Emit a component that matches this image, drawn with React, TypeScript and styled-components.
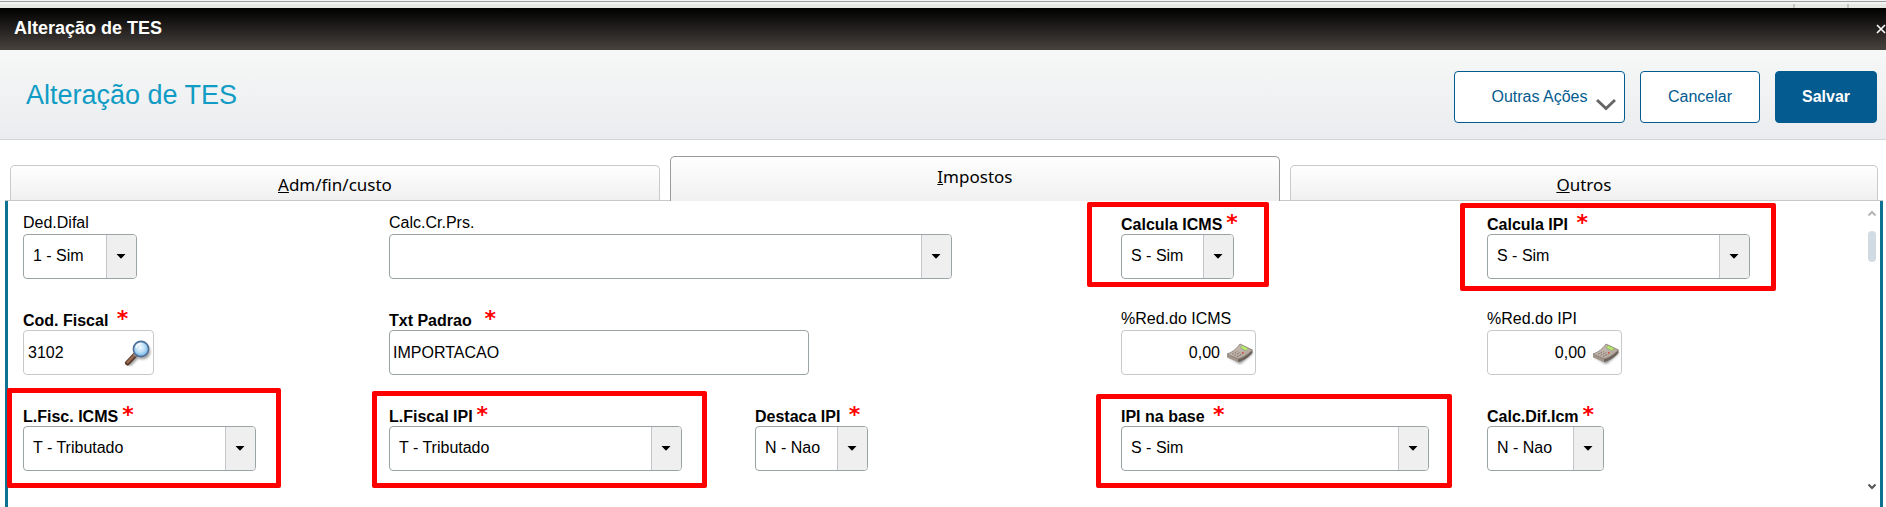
import React, { useId } from "react";
import styled, { createGlobalStyle, css } from "styled-components";

const GlobalStyle = createGlobalStyle`
  * { box-sizing: border-box; }
  html, body { margin: 0; padding: 0; background: #fff; }
  body, button, input, select {
    font-family: "Liberation Sans", Arial, sans-serif;
    font-size: 16px;
    color: #000;
  }
`;

const Window = styled.main`
  display: flex;
  flex-direction: column;
  min-height: 100vh;
`;

const WindowEdge = styled.div`
  height: 8px;
  display: flex;
  justify-content: flex-end;
  align-items: flex-end;
  gap: 52px;
  padding-right: 37px;
  border-top: 1px solid #f2f3f3;
  background: linear-gradient(#999c9c 0 1px, #f2f3f1 1px 3px, #e6e8e4 3px);
`;

const EdgeTick = styled.span`
  width: 2px;
  height: 4px;
  background: #c4c6c6;
`;

const TitleBar = styled.div`
  display: flex;
  align-items: center;
  justify-content: space-between;
  height: 42px;
  padding: 0 0 0 14px;
  background: linear-gradient(#000, #47423e);
  color: #fff;
`;

const WindowTitle = styled.span`
  font-size: 18px;
  line-height: 20px;
  font-weight: 700;
  padding-bottom: 2px;
`;

const CloseButton = styled.button`
  display: flex;
  padding: 0;
  border: 0;
  background: none;
`;

const Header = styled.header`
  display: flex;
  align-items: center;
  justify-content: space-between;
  height: 90px;
  padding: 0 9px 0 26px;
  border-bottom: 1px solid #d2d4d6;
  background: linear-gradient(#f6f8f7, #ebecef);
`;

const Heading = styled.h1`
  margin: 0;
  font-size: 27px;
  line-height: 32px;
  font-weight: 400;
  color: #109cc4;
`;

const Actions = styled.div`
  display: flex;
  gap: 15px;
  padding-top: 4px;
`;

const ActionButton = styled.button<{ $width: number; $primary?: boolean }>`
  position: relative;
  width: ${(p) => p.$width}px;
  height: 52px;
  padding: 0;
  border: 1px solid #045b8f;
  border-radius: 4px;
  background: #fff;
  color: #045b8f;
  ${(p) =>
    p.$primary &&
    css`
      background: #045b8f;
      color: #fff;
      font-weight: 700;
    `}
`;

const ButtonChevron = styled.svg`
  position: absolute;
  right: 8px;
  bottom: 10px;
`;

const TabList = styled.div`
  display: flex;
  align-items: flex-end;
  gap: 10px;
  margin: 16px 3px 0 5px;
  padding: 0 5px;
  border-bottom: 1px solid #c8c8c8;
`;

const Tab = styled.button<{ $grow: number; $active?: boolean }>`
  flex: ${(p) => p.$grow} 1 0;
  height: 35px;
  padding: 4px 0 0;
  border: 1px solid #c8cacb;
  border-bottom: 0;
  border-radius: 5px 5px 0 0;
  background: linear-gradient(#fff, #f0f0f0);
  font-family: "Noto Sans", Tahoma, sans-serif;
  font-size: 17px;
  line-height: 24px;
  ${(p) =>
    p.$active &&
    css`
      height: 45px;
      margin-bottom: -1px;
      padding: 0 0 4px;
      border-color: #999c9e;
    `}
`;

const Panel = styled.section`
  flex: 1;
  display: flex;
  margin: 0 3px 0 5px;
  border: solid #0b7391;
  border-width: 0 3px;
`;

const FieldGrid = styled.form`
  flex: 1;
  display: grid;
  grid-template-columns: repeat(5, minmax(0, 1fr));
  grid-auto-rows: 96px;
  padding: 9px 13px 0 15px;
`;

const Scrollbar = styled.div`
  display: flex;
  flex-direction: column;
  align-items: center;
  width: 12px;
  margin-right: 2px;
  padding: 9px 1px 17px;
`;

const ScrollThumb = styled.div`
  width: 8px;
  height: 31px;
  margin: 14px 0 auto;
  border-radius: 4px;
  background: #d0dbe3;
`;

const FieldBox = styled.div<{ $column: number; $width: number }>`
  position: relative;
  grid-column-start: ${(p) => p.$column};
  width: ${(p) => p.$width}px;
`;

const Label = styled.label<{ $required?: boolean }>`
  display: flex;
  align-items: flex-end;
  height: 24px;
  padding-bottom: ${(p) => (p.$required ? 0 : 2)}px;
  font-weight: ${(p) => (p.$required ? 700 : 400)};
  line-height: 18px;
  white-space: pre;
`;

const Asterisk = styled.span`
  padding-left: 4px;
  font-family: "DejaVu Sans", Verdana, sans-serif;
  font-size: 22px;
  line-height: 22px;
  color: #f00;
`;

const Frame = styled.div<{ $light?: boolean }>`
  display: grid;
  grid-template-columns: 1fr;
  height: 45px;
  border: 1px solid ${(p) => (p.$light ? "#c6c9ca" : "#9aa3a5")};
  border-radius: 4px;
  background: #fff;
  overflow: hidden;
`;

const Select = styled.select`
  grid-area: 1 / 1;
  width: 100%;
  padding: 0 30px 2px 9px;
  border: 0;
  background: none;
  appearance: none;
`;

const SelectArrow = styled.span`
  grid-area: 1 / 1;
  justify-self: end;
  display: flex;
  align-items: center;
  justify-content: center;
  width: 30px;
  padding-right: 1px;
  border-left: 1px solid #c3c6c7;
  background: #efefef;
  pointer-events: none;
`;

const TextInput = styled.input<{ $numeric?: boolean; $inset?: boolean }>`
  grid-area: 1 / 1;
  width: 100%;
  padding: 0 ${(p) => (p.$numeric ? 35 : 4)}px 0 ${(p) => (p.$inset ? 4 : 3)}px;
  border: 0;
  background: none;
  text-align: ${(p) => (p.$numeric ? "right" : "left")};
`;

const InputButton = styled.button`
  grid-area: 1 / 1;
  justify-self: end;
  align-self: center;
  display: flex;
  padding: 0 1px 0 0;
  border: 0;
  background: none;
`;

// How far the outline reaches beyond each side of its field.
type Edges = [top: number, right: number, bottom: number, left: number];

const Highlight = styled.div<{ $edges: Edges }>`
  position: absolute;
  inset: ${(p) => p.$edges.map((e) => `${-e}px`).join(" ")};
  border: 5px solid #f00;
  border-radius: 2px;
  pointer-events: none;
`;

const MagnifierIcon = () => (
  <svg width="28" height="28" viewBox="0 0 28 28" aria-hidden="true">
    <defs>
      <radialGradient id="lens" cx="0.45" cy="0.4" r="0.6">
        <stop offset="0" stopColor="#f4fbff" />
        <stop offset="0.55" stopColor="#b5dcf5" />
        <stop offset="1" stopColor="#6fb0dd" />
      </radialGradient>
      <filter id="lensShadow" x="-20%" y="-20%" width="150%" height="150%">
        <feGaussianBlur stdDeviation="1.3" />
      </filter>
    </defs>
    <g filter="url(#lensShadow)" opacity="0.35">
      <circle cx="18.5" cy="12.5" r="8" />
      <path d="M13 18L5 26" stroke="#000" strokeWidth="4" />
    </g>
    <path d="M11.5 15.5L3.5 24" stroke="#5a3a2c" strokeWidth="5" strokeLinecap="round" />
    <path d="M11 15.5L3.5 23.3" stroke="#9a6b50" strokeWidth="2.4" strokeLinecap="round" />
    <path d="M12.6 14.6L10.6 16.6" stroke="#8e9499" strokeWidth="4" />
    <circle cx="17" cy="10" r="7.6" fill="url(#lens)" stroke="#4f7199" strokeWidth="1.6" />
    <path d="M12 8.6A5.6 5.6 0 0 1 17.5 4.8" fill="none" stroke="#fff" strokeWidth="1.6" />
  </svg>
);

const CalculatorIcon = () => (
  <svg width="28" height="24" viewBox="0 0 28 24" aria-hidden="true">
    <defs>
      <linearGradient id="calcFace" x1="0" y1="0" x2="1" y2="1">
        <stop offset="0" stopColor="#cfc6be" />
        <stop offset="1" stopColor="#ab9e93" />
      </linearGradient>
      <filter id="calcShadow" x="-20%" y="-20%" width="140%" height="150%">
        <feGaussianBlur stdDeviation="1.4" />
      </filter>
    </defs>
    <path d="M3 16L15 6L27 12L14 23Z" opacity="0.5" filter="url(#calcShadow)" />
    <path d="M1 13L12 18V21L1 16.5Z" fill="#a3978c" />
    <path d="M12 18Q18 17 26.5 9V12Q19 20 12 21Z" fill="#6d635b" />
    <path d="M1 13Q9 10.5 14 3L26.5 9Q18 17 12 18Z" fill="url(#calcFace)" stroke="#857a71" strokeWidth="0.8" />
    <path d="M14 6.6L16.4 4.6L22.6 7.6L19.8 9.8Z" fill="#b9ec6c" stroke="#8a9a70" strokeWidth="0.6" />
    <path
      d="M6 13.2L11.5 10.200M8.500 14.400L14 11.400M11 15.700L16 13"
      stroke="#857668"
      strokeWidth="1"
      strokeDasharray="1.8 1"
    />
    <circle cx="16.8" cy="11.8" r="0.9" fill="#d2402e" />
  </svg>
);

interface FieldProps {
  label: string;
  column: number;
  width: number;
  required?: boolean;
  highlight?: Edges;
}

function Field({
  id,
  label,
  column,
  width,
  required,
  highlight,
  children,
}: FieldProps & { id: string; children: React.ReactNode }) {
  // Required captions are padded to a fixed length ahead of the marker.
  return (
    <FieldBox $column={column} $width={width}>
      <Label htmlFor={id} $required={required}>
        {required ? label.padEnd(12) : label}
        {required && <Asterisk>*</Asterisk>}
      </Label>
      {children}
      {highlight && <Highlight $edges={highlight} />}
    </FieldBox>
  );
}

function SelectField({ value, ...field }: FieldProps & { value: string }) {
  const id = useId();
  return (
    <Field id={id} {...field}>
      <Frame>
        <Select id={id} defaultValue={value}>
          <option>{value}</option>
        </Select>
        <SelectArrow>
          <svg width="10" height="5" viewBox="0 0 10 5" aria-hidden="true">
            <path d="M0.500 0H9.500L5 4.800Z" />
          </svg>
        </SelectArrow>
      </Frame>
    </Field>
  );
}

function InputField({
  value,
  numeric,
  icon,
  action,
  ...field
}: FieldProps & { value: string; numeric?: boolean; icon?: React.ReactNode; action?: string }) {
  const id = useId();
  return (
    <Field id={id} {...field}>
      <Frame $light={Boolean(icon)}>
        <TextInput id={id} defaultValue={value} $numeric={numeric} $inset={Boolean(icon)} />
        {icon && (
          <InputButton type="button" aria-label={action}>
            {icon}
          </InputButton>
        )}
      </Frame>
    </Field>
  );
}

export default function App() {
  return (
    <>
      <GlobalStyle />
      <Window>
        <WindowEdge>
          <EdgeTick />
          <EdgeTick />
        </WindowEdge>
        <TitleBar>
          <WindowTitle>Alteração de TES</WindowTitle>
          <CloseButton aria-label="Fechar">
            <svg width="10" height="10" viewBox="0 0 10 10" aria-hidden="true">
              <path d="M1 1L9 9M9 1L1 9" stroke="#fff" strokeWidth="1.6" />
            </svg>
          </CloseButton>
        </TitleBar>
        <Header>
          <Heading>Alteração de TES</Heading>
          <Actions>
            <ActionButton $width={171}>
              Outras Ações
              <ButtonChevron width="20" height="14" viewBox="0 0 20 14" aria-hidden="true">
                <path d="M1 2L10 10.5L19 2" fill="none" stroke="#666" strokeWidth="3" />
              </ButtonChevron>
            </ActionButton>
            <ActionButton $width={120}>Cancelar</ActionButton>
            <ActionButton $width={102} $primary>
              Salvar
            </ActionButton>
          </Actions>
        </Header>
        <TabList role="tablist">
          <Tab role="tab" $grow={650}>
            <u>A</u>dm/fin/custo
          </Tab>
          <Tab role="tab" aria-selected $grow={610} $active>
            <u>I</u>mpostos
          </Tab>
          <Tab role="tab" $grow={588}>
            <u>O</u>utros
          </Tab>
        </TabList>
        <Panel>
          <FieldGrid>
            <SelectField label="Ded.Difal" column={1} width={114} value="1 - Sim" />
            <SelectField label="Calc.Cr.Prs." column={2} width={563} value="" />
            <SelectField label="Calcula ICMS" column={4} width={113} value="S - Sim" required highlight={[8, 35, -19, 34]} />
            <SelectField label="Calcula IPI" column={5} width={263} value="S - Sim" required highlight={[7, 26, -15, 27]} />

            <InputField
              label="Cod. Fiscal"
              column={1}
              width={131}
              value="3102"
              required
              icon={<MagnifierIcon />}
              action="Pesquisar código fiscal"
            />
            <InputField label="Txt Padrao" column={2} width={420} value="IMPORTACAO" required />
            <InputField
              label="%Red.do ICMS"
              column={4}
              width={135}
              value="0,00"
              numeric
              icon={<CalculatorIcon />}
              action="Abrir calculadora"
            />
            <InputField
              label="%Red.do IPI"
              column={5}
              width={135}
              value="0,00"
              numeric
              icon={<CalculatorIcon />}
              action="Abrir calculadora"
            />

            <SelectField label="L.Fisc. ICMS" column={1} width={233} value="T - Tributado" required highlight={[14, 25, -10, 16]} />
            <SelectField label="L.Fiscal IPI" column={2} width={293} value="T - Tributado" required highlight={[11, 25, -10, 17]} />
            <SelectField label="Destaca IPI" column={3} width={113} value="N - Nao" required />
            <SelectField label="IPI na base" column={4} width={308} value="S - Sim" required highlight={[8, 23, -10, 25]} />
            <SelectField label="Calc.Dif.Icm" column={5} width={117} value="N - Nao" required />
          </FieldGrid>
          <Scrollbar>
            <svg width="8" height="7" viewBox="0 0 8 7" aria-hidden="true">
              <path d="M0.500 5.500L4 2L7.500 5.500" fill="none" stroke="#b5b5b5" strokeWidth="2" />
            </svg>
            <ScrollThumb />
            <svg width="8" height="7" viewBox="0 0 8 7" aria-hidden="true">
              <path d="M0.500 1.500L4 5L7.500 1.500" fill="none" stroke="#555" strokeWidth="2" />
            </svg>
          </Scrollbar>
        </Panel>
      </Window>
    </>
  );
}
